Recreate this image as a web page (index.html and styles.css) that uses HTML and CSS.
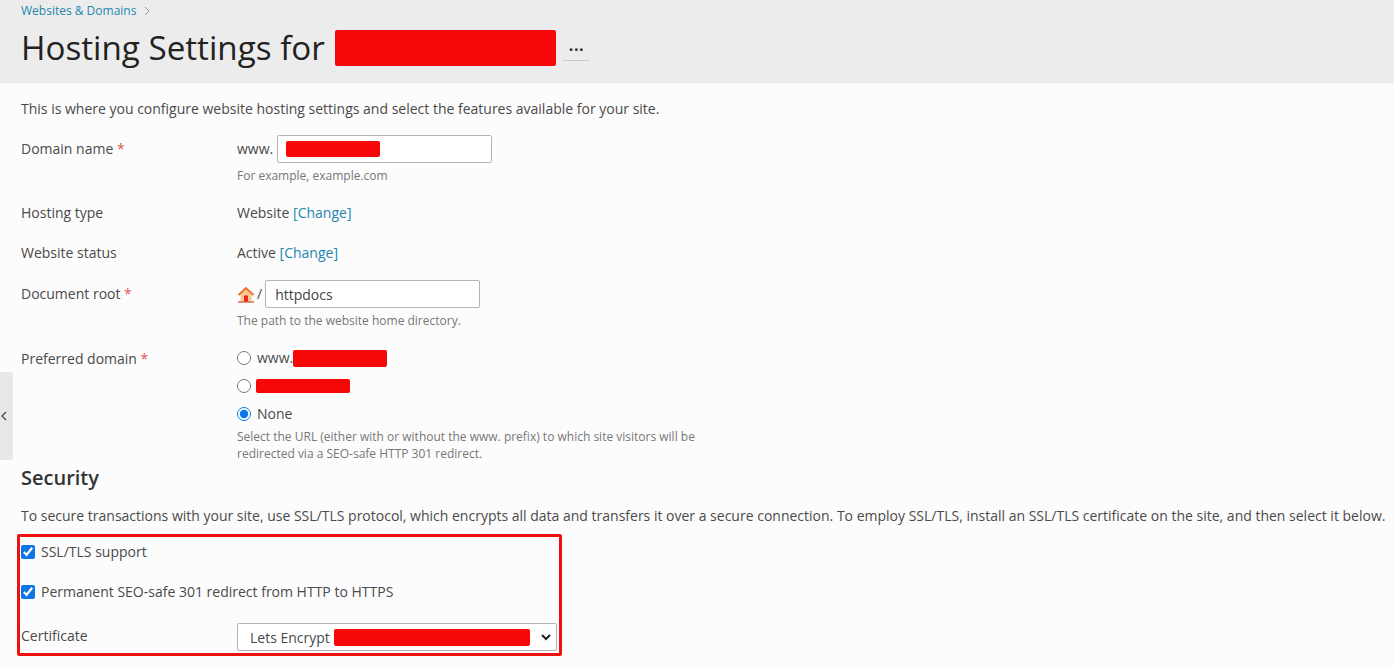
FILE: index.html
```html
<!DOCTYPE html>
<html lang="en">
<head>
    <meta charset="UTF-8">
    <title>Hosting Settings</title>
    <link rel="stylesheet" href="styles.css">
</head>
<body>
    <header class="page-header">
        <div class="breadcrumb"><a href="#">Websites &amp; Domains</a>
            <svg class="crumb-arrow" width="8" height="10" viewBox="0 0 8 10"><path d="M2 1l4 4-4 4" fill="none" stroke="#9a9a9a" stroke-width="1"/></svg>
        </div>
        <h1>Hosting Settings for <span class="scribble title-scribble"></span> <span class="more">...</span></h1>
    </header>

    <button class="side-toggle" type="button" aria-label="Collapse">
        <svg width="6" height="10" viewBox="0 0 6 10"><path d="M5 1L1 5l4 4" fill="none" stroke="#444" stroke-width="1.2"/></svg>
    </button>

    <main class="content">
        <p class="intro">This is where you configure website hosting settings and select the features available for your site.</p>

        <div class="row row-domain">
            <div class="label">Domain name <span class="req">*</span></div>
            <div class="field">
                <div class="inline">
                    <span>www.</span>
                    <div class="text-box domain-box"><span class="scribble domain-scribble"></span></div>
                </div>
                <div class="hint">For example, example.com</div>
            </div>
        </div>

        <div class="row row-type">
            <div class="label">Hosting type</div>
            <div class="field">Website <a href="#">[Change]</a></div>
        </div>

        <div class="row row-status">
            <div class="label">Website status</div>
            <div class="field">Active <a href="#">[Change]</a></div>
        </div>

        <div class="row row-root">
            <div class="label">Document root <span class="req">*</span></div>
            <div class="field">
                <div class="inline">
                    <svg class="home-icon" width="18" height="17" viewBox="0 0 18 17">
                        <path d="M3.5 8v7.5h11V8L9 3z" fill="#fbc596"/>
                        <path d="M1.5 9L9 2l7.5 7" fill="none" stroke="#ee7430" stroke-width="2"/>
                        <rect x="7" y="9.5" width="4" height="6" fill="#e8261a"/>
                        <rect x="1" y="15.4" width="16" height="1.2" fill="#c9481c"/>
                    </svg>
                    <span>/</span>
                    <div class="text-box root-box">httpdocs</div>
                </div>
                <div class="hint">The path to the website home directory.</div>
            </div>
        </div>

        <div class="row row-preferred">
            <div class="label">Preferred domain <span class="req">*</span></div>
            <div class="field">
                <label class="radio-line"><input type="radio" name="pref"> <span>www.</span><span class="scribble pref-scribble"></span></label>
                <label class="radio-line"><input type="radio" name="pref"> <span class="scribble pref-scribble-2"></span></label>
                <label class="radio-line"><input type="radio" name="pref" checked> <span>None</span></label>
                <div class="hint hint-wide">Select the URL (either with or without the www. prefix) to which site visitors will be redirected via a SEO-safe HTTP 301 redirect.</div>
            </div>
        </div>

        <h2>Security</h2>
        <p class="security-text">To secure transactions with your site, use SSL/TLS protocol, which encrypts all data and transfers it over a secure connection. To employ SSL/TLS, install an SSL/TLS certificate on the site, and then select it below.</p>

        <div class="marked">
            <label class="check-line"><input type="checkbox" checked> SSL/TLS support</label>
            <label class="check-line check-second"><input type="checkbox" checked> Permanent SEO-safe 301 redirect from HTTP to HTTPS</label>
            <div class="cert-row">
                <div class="cert-label">Certificate</div>
                <div class="select-box">
                    <span>Lets Encrypt</span><span class="scribble cert-scribble"></span>
                    <svg class="select-arrow" width="10" height="7" viewBox="0 0 10 7"><path d="M1 1l4 4 4-4" fill="none" stroke="#222" stroke-width="2"/></svg>
                </div>
            </div>
        </div>
    </main>
</body>
</html>
```

FILE: styles.css
```css
html, body {
    height: 100%;
}
body {
    margin: 0;
    background: #fcfcfc;
    color: #4a4a4a;
    font-family: "Open Sans", sans-serif;
    font-size: 14px;
    line-height: 20px;
    overflow: hidden;
    position: relative;
}
a {
    color: #1e87b0;
    text-decoration: none;
}
.page-header {
    height: 83px;
    box-sizing: border-box;
    padding: 1px 21px 0;
    background: #ececec;
    border-bottom: 1px solid #e6e6e6;
}
.breadcrumb {
    font-size: 12px;
    line-height: 20px;
}
.crumb-arrow {
    margin-left: 3px;
    vertical-align: -1px;
}
h1 {
    margin: 5px 0 0;
    font-size: 33.2px;
    line-height: 44px;
    font-weight: 400;
    color: #222;
    display: flex;
    align-items: center;
    white-space: pre;
}
.more {
    width: 26px;
    height: 22px;
    margin: 3px 0 0 7px;
    font-size: 16px;
    font-weight: 700;
    line-height: 14px;
    letter-spacing: 0.5px;
    text-align: center;
    border-bottom: 1px solid #c8c8c8;
    color: #333;
}
.scribble {
    display: inline-block;
    background: #f70808;
    border-radius: 2px;
}
.title-scribble {
    width: 221px;
    height: 36px;
    margin-left: 2px;
}
.side-toggle {
    position: absolute;
    left: 0;
    top: 372px;
    width: 13px;
    height: 88px;
    padding: 0 0 0 1px;
    border: 0;
    border-radius: 0 3px 3px 0;
    background: #e8e8e8;
    display: flex;
    align-items: center;
}
.content {
    padding: 16px 0 0 21px;
}
.content p {
    margin: 0;
}
.row {
    display: grid;
    grid-template-columns: 216px 1fr;
}
.row-domain {
    margin-top: 16px;
}
.row-type {
    margin-top: 18px;
}
.row-status {
    margin-top: 20px;
}
.row-root {
    margin-top: 17px;
}
.row-preferred {
    margin-top: 14px;
}
.row-domain .label,
.row-root .label {
    padding-top: 4px;
}
.row-preferred .label {
    padding-top: 5px;
}
.req {
    color: #e0574f;
}
.inline {
    display: flex;
    align-items: center;
    height: 28px;
}
.text-box {
    box-sizing: border-box;
    height: 28px;
    background: #fff;
    border: 1px solid #b5b5b5;
    border-radius: 2px;
    display: flex;
    align-items: center;
}
.domain-box {
    width: 215px;
    margin-left: 4px;
    padding-left: 8px;
}
.domain-scribble {
    width: 94px;
    height: 16px;
}
.root-box {
    width: 215px;
    margin-left: 3px;
    padding: 1px 0 0 9px;
    color: #444;
}
.home-icon {
    margin-right: 2px;
}
.hint {
    margin-top: 4px;
    font-size: 12px;
    line-height: 18px;
    color: #777;
}
.hint-wide {
    width: 480px;
    margin-top: 0;
    line-height: 17px;
}
.radio-line {
    display: flex;
    align-items: center;
    height: 28px;
}
.radio-line input {
    width: 14px;
    height: 14px;
    margin: 0 6px 0 0;
    accent-color: #0a76e8;
}
.pref-scribble {
    width: 94px;
    height: 17px;
}
.pref-scribble-2 {
    width: 94px;
    height: 14px;
    margin-left: -1px;
}
h2 {
    margin: 1px 0 0;
    font-size: 20px;
    line-height: 30px;
    font-weight: 600;
    color: #333;
}
.security-text {
    padding-top: 13px;
    white-space: nowrap;
}
.marked {
    box-sizing: border-box;
    width: 545px;
    height: 122px;
    margin: 8px 0 0 -4px;
    padding: 0 2px 0 1px;
    border: 3px solid #ee1111;
    border-radius: 2px;
}
.check-line {
    display: flex;
    align-items: center;
    height: 20px;
    margin-top: 5px;
}
.check-second {
    margin-top: 20px;
}
.check-line input {
    width: 14px;
    height: 14px;
    margin: 0 6px 0 0;
    accent-color: #0a76e8;
}
.cert-row {
    display: flex;
    justify-content: space-between;
    margin-top: 21px;
}
.cert-label {
    padding-top: 3px;
}
.select-box {
    box-sizing: border-box;
    width: 320px;
    height: 28px;
    padding: 1px 5px 0 12px;
    background: #fff;
    border: 1px solid #b5b5b5;
    border-radius: 2px;
    display: flex;
    align-items: center;
}
.cert-scribble {
    width: 196px;
    height: 17px;
    margin-left: 4px;
}
.select-arrow {
    margin-left: auto;
}
```
